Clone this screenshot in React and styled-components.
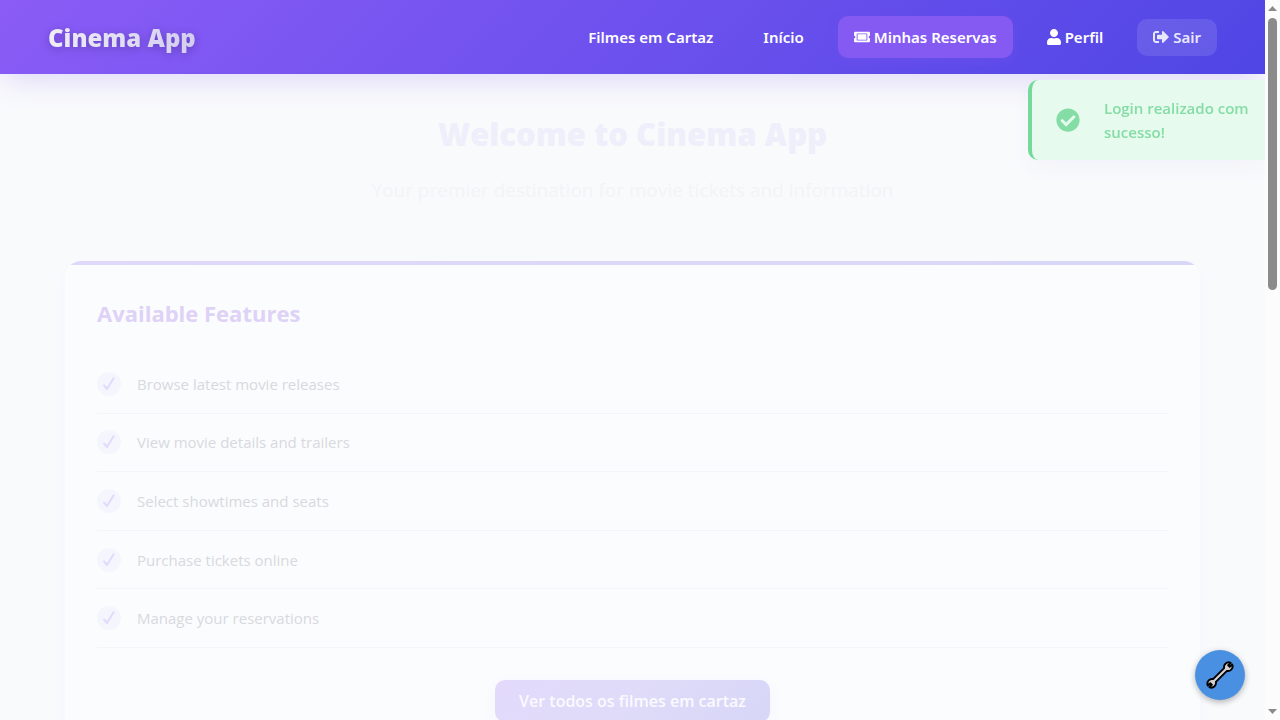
import React from "react";
import styled, { createGlobalStyle, css } from "styled-components";
import { FaTicketAlt, FaUser, FaSignOutAlt, FaCheckCircle } from "react-icons/fa";

const GlobalStyle = createGlobalStyle`
  *, *::before, *::after { box-sizing: border-box; }
  html { scrollbar-width: none; }
  body {
    margin: 0;
    padding-right: 15px;
    background: #f9fafc;
    font-family: "Open Sans", "Noto Sans", sans-serif;
    font-size: 15px;
    line-height: 24px;
    overflow-x: hidden;
  }
`;

const Header = styled.header`
  position: relative;
  display: flex;
  align-items: center;
  justify-content: space-between;
  padding: 16px 48px;
  background: linear-gradient(135deg, #8b5cf6 0%, #4f46e5 100%);
  box-shadow: 0 10px 30px -5px rgba(109, 71, 230, 0.2);
`;

const Brand = styled.a`
  padding-top: 2px;
  font-size: 24px;
  line-height: 32px;
  font-weight: 800;
  text-decoration: none;
  color: transparent;
  background: linear-gradient(90deg, #efedf5, #d3cdf0);
  background-clip: text;
  filter: drop-shadow(0 2px 4px rgba(40, 20, 100, 0.35));
`;

const Nav = styled.nav`
  display: flex;
  align-items: center;
  gap: 18px;
`;

const item = css`
  display: inline-flex;
  align-items: center;
  gap: 4px;
  border-radius: 10px;
  font-family: "Noto Sans", "Open Sans", sans-serif;
  font-size: 15px;
  font-weight: 600;
  white-space: nowrap;

  svg { width: ${(p) => p.$icon || 16}px; height: 16px; }
`;

const NavLink = styled.a`
  ${item}
  padding: 9px 16px;
  line-height: 24px;
  color: #fff;
  text-decoration: none;
  background: ${(p) => (p.$active ? "#855af3" : "transparent")};
  box-shadow: ${(p) => (p.$active ? "0 4px 12px rgba(139, 92, 246, 0.2)" : "none")};
`;

const LogoutButton = styled.button`
  ${item}
  padding: 8px 16px;
  line-height: 21px;
  border: 0;
  color: #e9e7fc;
  background: rgba(255, 255, 255, 0.11);
`;

const Main = styled.main`
  padding: 36px 65px 64px;
`;

const Hero = styled.section`
  text-align: center;
  margin-bottom: 59px;
`;

const Title = styled.h1`
  margin: 0 0 20px;
  font-size: 31px;
  line-height: 48px;
  font-weight: 800;
  color: #efeefb;
`;

const Subtitle = styled.p`
  margin: 0;
  font-size: 19px;
  line-height: 24px;
  font-weight: 400;
  color: #f3f4f6;
`;

const Card = styled.section`
  overflow: hidden;
  border-radius: 16px;
  background: #fbfcfe;
  box-shadow: 0 8px 20px rgba(110, 90, 230, 0.02);
`;

const CardAccent = styled.div`
  height: 4px;
  background: linear-gradient(90deg, #e0d8fb, #d8d7f8);
`;

const CardBody = styled.div`
  padding: 32px;
`;

const CardTitle = styled.h2`
  margin: 0 0 26px;
  font-size: 22px;
  line-height: 32px;
  font-weight: 700;
  color: #ded2f6;
`;

const FeatureList = styled.ul`
  display: grid;
  grid-auto-rows: 1fr;
  min-height: 293px;
  margin: 0 0 32px;
  padding: 0;
  list-style: none;
`;

const Feature = styled.li`
  display: flex;
  align-items: center;
  gap: 16px;
  border-bottom: 1px solid #f4f5f8;
  color: #d8d9dd;
`;

const Bullet = styled.span`
  display: grid;
  place-items: center;
  width: 24px;
  height: 24px;
  border-radius: 50%;
  background: #f5f5fd;
  color: #e2d9fc;
`;

const Actions = styled.div`
  display: flex;
  justify-content: center;
`;

const PrimaryLink = styled.a`
  padding: 9px 24px;
  border-radius: 10px;
  background: linear-gradient(135deg, #e3dafb 0%, #dfdbf9 50%, #d7d6f7 100%);
  box-shadow: 0 4px 14px rgba(120, 100, 240, 0.05);
  color: #fafaff;
  font-size: 16px;
  font-weight: 600;
  text-decoration: none;
`;

const Toast = styled.div`
  position: fixed;
  top: 80px;
  right: 15px;
  display: flex;
  align-items: center;
  gap: 24px;
  width: 237px;
  height: 80px;
  padding: 16px 0 16px 24px;
  border-left: 4px solid #74d99a;
  border-radius: 10px 0 0 10px;
  background: #e6faee;
  box-shadow: 0 8px 20px rgba(90, 70, 200, 0.04);
  color: #83dda5;
  font-weight: 600;

  svg { flex: none; width: 24px; height: 24px; }
  p { margin: 0; }
`;

const ToolButton = styled.button`
  position: fixed;
  right: 35px;
  bottom: 20px;
  display: grid;
  place-items: center;
  width: 50px;
  height: 50px;
  padding: 0;
  border: 0;
  border-radius: 50%;
  background: #4a90e2;
  box-shadow: 0 2px 6px rgba(0, 0, 0, 0.3);
`;

const ScrollTrack = styled.div`
  position: fixed;
  top: 0;
  right: 0;
  bottom: 0;
  display: flex;
  flex-direction: column;
  align-items: center;
  justify-content: space-between;
  width: 15px;
  padding: 6px 0;
  background: #fcfcfc;
`;

const ScrollThumb = styled.div`
  width: 9px;
  height: 272px;
  margin: 7px 0 auto;
  border-radius: 5px;
  background: #8b8b8b;
`;

const Arrow = ({ down }) => (
  <svg width="9" height="5" viewBox="0 0 9 5" aria-hidden="true">
    <path d={down ? "M0 0h9L4.500 5z" : "M0 5h9L4.500 0z"} fill="#8b8b8b" />
  </svg>
);

const Check = () => (
  <svg width="12" height="14" viewBox="0 0 12 14" aria-hidden="true">
    <path d="M1 8.500 L4 12 L10.600 1.300" fill="none" stroke="currentColor" strokeWidth="2" strokeLinecap="round" strokeLinejoin="round" />
  </svg>
);

const Wrench = () => (
  <svg width="28" height="28" viewBox="0 0 28 28" aria-hidden="true">
    <g transform="rotate(45 14 14)">
      <path
        d="M12 6.200C10.600 5.300 9.900 3.900 9.900 2.200C9.900 0.300 11 -1.400 12.900 -2.100V1.300H15.100V-2.100C17 -1.400 18.100 0.300 18.100 2.200C18.100 3.900 17.400 5.300 16 6.200V21.800C17.400 22.700 18.100 24.100 18.100 25.800C18.100 27.700 17 29.400 15.100 30.100V26.700H12.900V30.100C11 29.400 9.900 27.700 9.900 25.800C9.900 24.100 10.600 22.700 12 21.800Z"
        fill="#d3d1d1" stroke="#000" strokeWidth="1.900" strokeLinejoin="round"
      />
    </g>
  </svg>
);

const features = [
  "Browse latest movie releases",
  "View movie details and trailers",
  "Select showtimes and seats",
  "Purchase tickets online",
  "Manage your reservations",
];

export default function App() {
  return (
    <>
      <GlobalStyle />
      <Header>
        <Brand href="#">Cinema App</Brand>
        <Nav>
          <NavLink href="#filmes">Filmes em Cartaz</NavLink>
          <NavLink href="#inicio">Início</NavLink>
          <NavLink href="#reservas" $active><FaTicketAlt />Minhas Reservas</NavLink>
          <NavLink href="#perfil" $icon={14}><FaUser />Perfil</NavLink>
          <LogoutButton type="button"><FaSignOutAlt />Sair</LogoutButton>
        </Nav>
      </Header>
      <Main>
        <Hero>
          <Title>Welcome to Cinema App</Title>
          <Subtitle>Your premier destination for movie tickets and information</Subtitle>
        </Hero>
        <Card>
          <CardAccent />
          <CardBody>
            <CardTitle>Available Features</CardTitle>
            <FeatureList>
              {features.map((text) => (
                <Feature key={text}><Bullet><Check /></Bullet>{text}</Feature>
              ))}
            </FeatureList>
            <Actions>
              <PrimaryLink href="#filmes">Ver todos os filmes em cartaz</PrimaryLink>
            </Actions>
          </CardBody>
        </Card>
      </Main>
      <Toast role="status">
        <FaCheckCircle />
        <p>Login realizado com sucesso!</p>
      </Toast>
      <ToolButton type="button" aria-label="Ferramentas"><Wrench /></ToolButton>
      <ScrollTrack aria-hidden="true">
        <Arrow />
        <ScrollThumb />
        <Arrow down />
      </ScrollTrack>
    </>
  );
}
